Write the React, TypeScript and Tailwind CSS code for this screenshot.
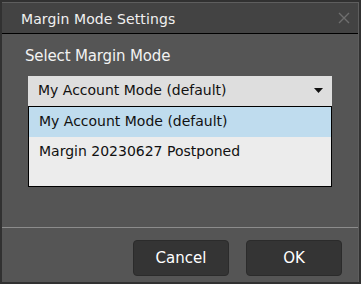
const options = ['My Account Mode (default)', 'Margin 20230627 Postponed'];

export default function App() {
  const selected = 0;

  return (
    <div className="w-[361px] h-[284px] bg-[#313131] pt-[2px] pl-[2px] font-['DejaVu_Sans',sans-serif]">
      <div className="w-[357px] h-[280px] bg-[#555555] border-t border-r border-[#5e5e5e] flex flex-col">
        {/* title bar */}
        <div className="h-[31px] bg-[#434343] border-b border-black flex items-center justify-between pl-[19px] pr-[8px] pt-[2px]">
          <span className="text-[14px] text-[#f0f0f0] tracking-[0.1px]">Margin Mode Settings</span>
          <svg width="12" height="12" viewBox="0 0 12 12" className="-mt-[2px]">
            <path d="M1 1 L11 11 M11 1 L1 11" stroke="#6e6e6e" strokeWidth="1.4" />
          </svg>
        </div>

        <div className="flex-1 px-[26px] pt-[11px]">
          <div className="text-[15px] text-[#f2f2f2] mb-[8px] -ml-[3px] tracking-[-0.15px]">Select Margin Mode</div>

          <div className="w-[304px]">
            <div className="h-[30px] bg-[#dedede] flex items-center justify-between pl-[10px] pr-[9px] text-[14px] text-[#111]">
              <span>{options[selected]}</span>
              <svg width="9" height="5" viewBox="0 0 9 5">
                <path d="M0 0 H9 L4.5 5 Z" fill="#111" />
              </svg>
            </div>
            <div className="h-[81px] bg-[#ececec] border border-black">
              {options.map((o, i) => (
                <div
                  key={o}
                  className={`h-[30px] flex items-center pl-[10px] text-[14px] text-[#111] ${i === selected ? 'bg-[#bfdcee]' : ''}`}
                >
                  {o}
                </div>
              ))}
            </div>
          </div>
        </div>

        <div className="border-t border-[#8c8c8c] h-[55px] flex items-start justify-end gap-[17px] pr-[16px] pt-[12px]">
          <button className="w-[96px] h-[36px] rounded-[4px] bg-[#343434] border border-[#2b2b2b] text-[15px] text-white">Cancel</button>
          <button className="w-[96px] h-[36px] rounded-[4px] bg-[#343434] border border-[#2b2b2b] text-[15px] text-white">OK</button>
        </div>
      </div>
    </div>
  );
}
